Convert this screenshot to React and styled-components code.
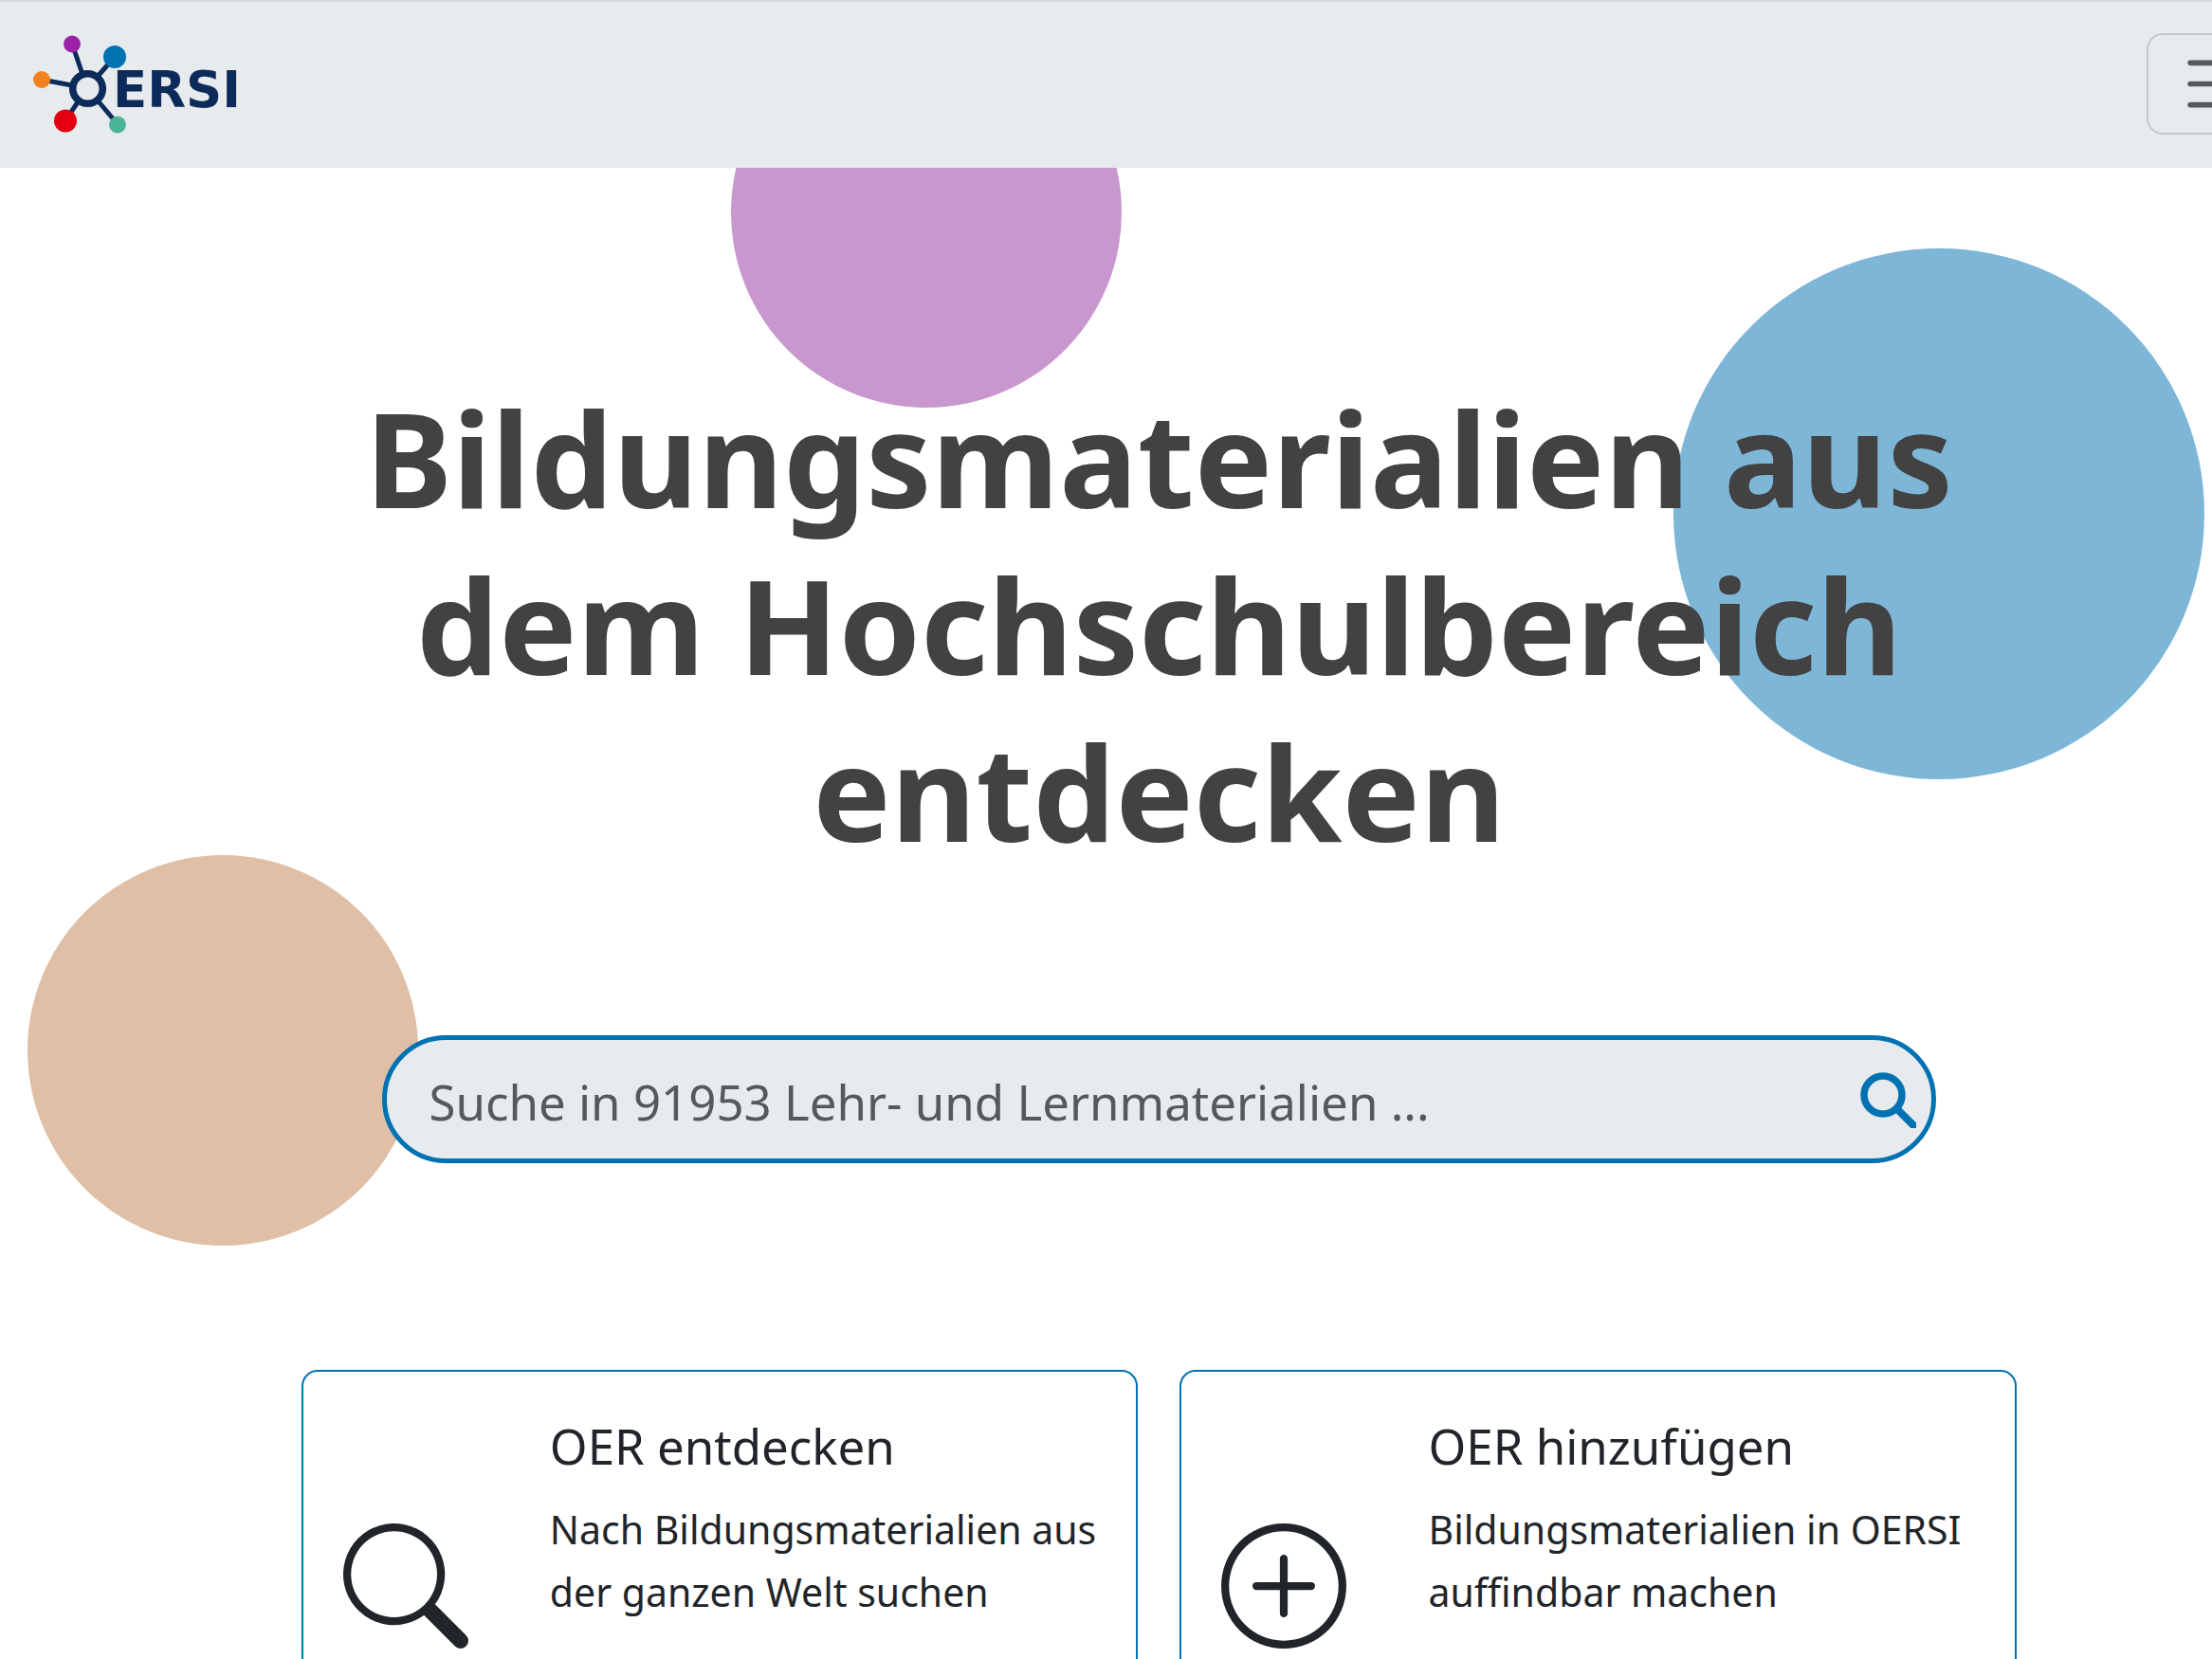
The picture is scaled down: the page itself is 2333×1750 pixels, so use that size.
import { useState } from "react";
import styled, { createGlobalStyle } from "styled-components";
import { BsPlusCircle, BsSearch } from "react-icons/bs";

const GlobalStyle = createGlobalStyle`
  * {
    box-sizing: border-box;
  }
  body {
    margin: 0;
    background: #fff;
    color: #212529;
    font-family: "Noto Sans", "Open Sans", sans-serif;
  }
`;

const Viewport = styled.div`
  height: 100vh;
  overflow: hidden;
`;

const Page = styled.div`
  width: calc(100% + 112px);
`;

const Header = styled.header`
  position: relative;
  z-index: 2;
  display: flex;
  align-items: center;
  justify-content: space-between;
  padding: 33px 28px 35px 35px;
  border-top: 2px solid #d9dbdd;
  background: #e7ebee;
`;

const LogoLink = styled.a`
  display: flex;
  svg {
    display: block;
    width: 224px;
    height: 107px;
  }
`;

const Toggler = styled.button`
  display: flex;
  padding: 10px 33px;
  border: 2px solid #c4c8cb;
  border-radius: 17px;
  background: transparent;
  color: #54595d;
  svg {
    display: block;
    width: 83px;
    height: 83px;
  }
`;

const Hero = styled.main`
  position: relative;
  display: flex;
  flex-direction: column;
  align-items: center;
`;

const Bubble = styled.div`
  position: absolute;
  z-index: -1;
  top: ${(props) => props.$top}px;
  left: ${(props) => props.$left}%;
  width: ${(props) => props.$size}px;
  height: ${(props) => props.$size}px;
  border-radius: 50%;
  background: ${(props) => props.$color};
`;

const Title = styled.h1`
  width: 74%;
  margin: 217px 0 170px;
  color: #424242;
  font-size: 138px;
  font-weight: 700;
  line-height: 176px;
  text-align: center;
`;

const SearchForm = styled.form`
  display: flex;
  align-items: center;
  width: 67%;
  height: 135px;
  padding: 0 16px 0 44px;
  border: 5px solid #0072b2;
  border-radius: 68px;
  background: #e7ebee;
`;

const SearchInput = styled.input`
  flex: 1;
  min-width: 0;
  padding: 4px 0 0;
  border: none;
  outline: none;
  background: transparent;
  color: #54595d;
  font-family: inherit;
  font-size: 51px;
  line-height: 66px;
  &::placeholder {
    color: #54595d;
    opacity: 1;
  }
`;

const SearchButton = styled.button`
  display: flex;
  padding: 0;
  border: none;
  background: transparent;
  color: #0072b2;
  svg {
    display: block;
    width: 60px;
    height: 60px;
  }
`;

const Cards = styled.section`
  display: grid;
  grid-template-columns: 1fr 1fr;
  gap: 44px;
  width: 74%;
  margin-top: 218px;
`;

const Card = styled.article`
  display: grid;
  grid-template-columns: 132px 1fr;
  align-items: center;
  column-gap: 86px;
  min-height: 456px;
  padding: 44px 42px;
  border: 2px solid #0072b2;
  border-radius: 17px;
  background: #fff;
  > svg {
    width: 132px;
    height: 132px;
  }
`;

const CardBody = styled.div`
  align-self: start;
  padding-top: 1px;
`;

const CardTitle = styled.h2`
  margin: 0 0 22px;
  font-size: 51px;
  font-weight: 400;
  line-height: 66px;
`;

const CardText = styled.p`
  margin: 0;
  font-size: 41px;
  line-height: 66px;
`;

function Logo() {
  return (
    <svg viewBox="0 0 224 107" role="img" aria-label="OERSI">
      <g stroke="#0c2b5b" strokeWidth="5">
        <path d="M41 11 57 58M86 25 57 58M9 49 57 58M34 92 57 58M89 96 57 58" />
      </g>
      <circle cx="57.5" cy="58.5" r="15.8" fill="#e7ebee" stroke="#0c2b5b" strokeWidth="7.6" />
      <circle cx="41" cy="11.5" r="9" fill="#9b22a7" />
      <circle cx="86" cy="25" r="12" fill="#0072b2" />
      <circle cx="9" cy="49" r="9" fill="#f0831e" />
      <circle cx="34" cy="92.5" r="12" fill="#e4000f" />
      <circle cx="89" cy="96.5" r="9" fill="#4bb496" />
      <text
        x="84"
        y="78"
        fill="#0c2b5b"
        fontFamily="DejaVu Sans, sans-serif"
        fontSize="53"
        fontWeight="700"
      >
        ERSI
      </text>
    </svg>
  );
}

const cards = [
  {
    icon: BsSearch,
    title: "OER entdecken",
    text: "Nach Bildungsmaterialien aus der ganzen Welt suchen",
  },
  {
    icon: BsPlusCircle,
    title: "OER hinzufügen",
    text: "Bildungsmaterialien in OERSI auffindbar machen",
  },
];

export default function App() {
  const [query, setQuery] = useState("");

  return (
    <Viewport>
      <GlobalStyle />
      <Page>
        <Header>
          <LogoLink href="#">
            <Logo />
          </LogoLink>
          <Toggler type="button" aria-label="Menü">
            <svg
              viewBox="0 0 30 30"
              stroke="currentColor"
              strokeWidth="2"
              strokeLinecap="round"
            >
              <path d="M4 7h22M4 15h22M4 23h22" />
            </svg>
          </Toggler>
        </Header>

        <Hero>
          <Bubble $top={-159} $left={31.55} $size={412} $color="#c897ce" />
          <Bubble $top={85} $left={72.2} $size={560} $color="#7eb6d8" />
          <Bubble $top={725} $left={1.2} $size={412} $color="#dfc0a6" />

          <Title>Bildungsmaterialien aus dem Hochschulbereich entdecken</Title>

          <SearchForm onSubmit={(e) => e.preventDefault()}>
            <SearchInput
              type="text"
              aria-label="Suche"
              placeholder="Suche in 91953 Lehr- und Lernmaterialien ..."
              value={query}
              onChange={(e) => setQuery(e.target.value)}
            />
            <SearchButton type="submit" aria-label="Suchen">
              <svg viewBox="0 0 60 60" fill="none" stroke="currentColor">
                <circle cx="25" cy="25" r="20" strokeWidth="7.5" />
                <path d="M39 39 62 62" strokeWidth="8" />
              </svg>
            </SearchButton>
          </SearchForm>

          <Cards>
            {cards.map(({ icon: Icon, title, text }) => (
              <Card key={title}>
                <Icon />
                <CardBody>
                  <CardTitle>{title}</CardTitle>
                  <CardText>{text}</CardText>
                </CardBody>
              </Card>
            ))}
          </Cards>
        </Hero>
      </Page>
    </Viewport>
  );
}
